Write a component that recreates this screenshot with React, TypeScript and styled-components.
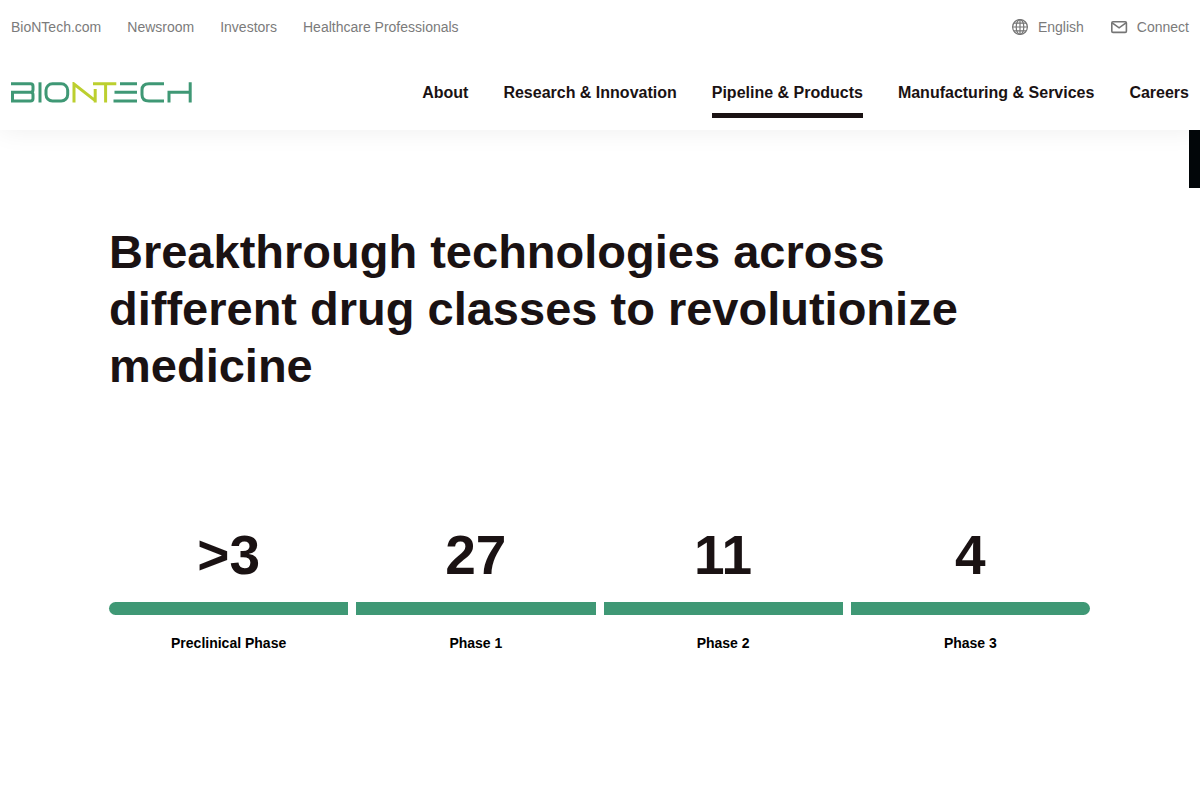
import React from "react";
import styled, { createGlobalStyle } from "styled-components";

const GlobalStyle = createGlobalStyle`
  *, *::before, *::after { box-sizing: border-box; }
  body {
    margin: 0;
    background: #fff;
    color: #1a1213;
    font-family: "Liberation Sans", Arial, sans-serif;
  }
`;

const Page = styled.div`
  min-height: 100vh;
`;

const Header = styled.header`
  position: relative;
  z-index: 1;
  padding: 16px 11px 12px;
  background: #fff;
  box-shadow: 0 0 25px rgba(0, 0, 0, 0.07);
`;

const UtilityBar = styled.div`
  display: flex;
  justify-content: space-between;
  line-height: 22px;
`;

const UtilityNav = styled.nav`
  display: flex;
  gap: 26px;
`;

const UtilityLink = styled.a`
  display: flex;
  align-items: center;
  gap: 9px;
  color: #7b7b7b;
  font-size: 14px;
  text-decoration: none;
`;

const MainBar = styled.div`
  display: flex;
  align-items: center;
  justify-content: space-between;
  margin-top: 28px;
`;

const LogoLink = styled.a`
  display: flex;
`;

const MainNav = styled.nav`
  display: flex;
  gap: 35px;
`;

const MainLink = styled.a<{ $active?: boolean }>`
  padding: 17px 0 10px;
  border-bottom: 5px solid ${(p) => (p.$active ? "#1a1213" : "transparent")};
  color: #1a1213;
  font-size: 16px;
  font-weight: 700;
  line-height: 20px;
  text-decoration: none;
`;

const SideTab = styled.div`
  position: absolute;
  top: 100%;
  right: 0;
  width: 11px;
  height: 58px;
  background: #020609;
`;

const Content = styled.main`
  padding: 93px 110px 0 109px;
`;

const Title = styled.h1`
  max-width: 880px;
  margin: 0;
  font-size: 47px;
  font-weight: 700;
  line-height: 57px;
`;

const Phases = styled.dl`
  display: grid;
  grid-template-columns: repeat(4, 1fr);
  gap: 8px;
  margin: 130px 0 0;
`;

const Phase = styled.div`
  display: flex;
  flex-direction: column-reverse;
  text-align: center;

  &:first-child dd::after {
    border-radius: 7px 0 0 7px;
  }
  &:last-child dd::after {
    border-radius: 0 7px 7px 0;
  }
`;

const PhaseCount = styled.dd`
  margin: 0;
  font-size: 55px;
  font-weight: 700;
  line-height: 62px;

  &::after {
    content: "";
    display: block;
    height: 13px;
    margin-top: 16px;
    background: #3f9875;
  }
`;

const PhaseName = styled.dt`
  margin-top: 18px;
  color: #000;
  font-size: 14px;
  font-weight: 700;
  line-height: 20px;
`;

const mainLinks = [
  "About",
  "Research & Innovation",
  "Pipeline & Products",
  "Manufacturing & Services",
  "Careers",
];

const phases = [
  { name: "Preclinical Phase", count: ">3" },
  { name: "Phase 1", count: "27" },
  { name: "Phase 2", count: "11" },
  { name: "Phase 3", count: "4" },
];

function Logo() {
  return (
    <svg width="181" height="21" viewBox="0 0 181 21" fill="none" strokeWidth="3" role="img" aria-label="BioNTech">
      <g stroke="#3f9875">
        <path d="M0 1.8H19.5Q22 1.8 22 4.2V7.8Q22 10.3 19.5 10.3H1.5V19H19.5Q22 19 22 16.5V12.8Q22 10.3 19.5 10.3" />
        <path d="M29 .3V20.5" />
        <rect x="35" y="1.8" width="21.7" height="17.2" rx="6.5" />
        <path d="M109 1.8H126M103.5 10.3H126M102.5 19H126" />
        <path d="M153 1.8H138Q131 1.8 131 8V12.8Q131 19 138 19H153" />
        <path d="M158 20.5V10.3H179M179.2 .3V20.5" />
      </g>
      <g stroke="#bccf2f">
        <path d="M63 20.5V2L84.2 18.6M84.2 7V20.5" />
        <path d="M82 1.8H105.3M94.6 1.8V20.5" />
      </g>
    </svg>
  );
}

function GlobeIcon() {
  return (
    <svg width="18" height="18" viewBox="0 0 18 18" fill="none" stroke="#757575" strokeWidth="1.2" aria-hidden="true">
      <circle cx="9" cy="9" r="7.4" />
      <ellipse cx="9" cy="9" rx="3.8" ry="7.4" />
      <path d="M9 1.6V16.4M1.6 9H16.4M2.7 5.2H15.3M2.7 12.8H15.3" />
    </svg>
  );
}

function MailIcon() {
  return (
    <svg width="18" height="18" viewBox="0 0 18 18" fill="none" stroke="#757575" strokeWidth="1.6" aria-hidden="true">
      <rect x="1.8" y="3.8" width="14.6" height="10.6" rx="1.2" />
      <path d="M2.2 4.8L9.1 9.8L16 4.8" />
    </svg>
  );
}

export default function App() {
  return (
    <Page>
      <GlobalStyle />
      <Header>
        <UtilityBar>
          <UtilityNav aria-label="Sites">
            <UtilityLink href="#">BioNTech.com</UtilityLink>
            <UtilityLink href="#">Newsroom</UtilityLink>
            <UtilityLink href="#">Investors</UtilityLink>
            <UtilityLink href="#">Healthcare Professionals</UtilityLink>
          </UtilityNav>
          <UtilityNav aria-label="Service">
            <UtilityLink href="#">
              <GlobeIcon />
              English
            </UtilityLink>
            <UtilityLink href="#">
              <MailIcon />
              Connect
            </UtilityLink>
          </UtilityNav>
        </UtilityBar>
        <MainBar>
          <LogoLink href="#">
            <Logo />
          </LogoLink>
          <MainNav aria-label="Main">
            {mainLinks.map((label) => (
              <MainLink key={label} href="#" $active={label === "Pipeline & Products"}>
                {label}
              </MainLink>
            ))}
          </MainNav>
        </MainBar>
        <SideTab />
      </Header>
      <Content>
        <Title>Breakthrough technologies across different drug classes to revolutionize medicine</Title>
        <Phases>
          {phases.map((phase) => (
            <Phase key={phase.name}>
              <PhaseName>{phase.name}</PhaseName>
              <PhaseCount>{phase.count}</PhaseCount>
            </Phase>
          ))}
        </Phases>
      </Content>
    </Page>
  );
}
